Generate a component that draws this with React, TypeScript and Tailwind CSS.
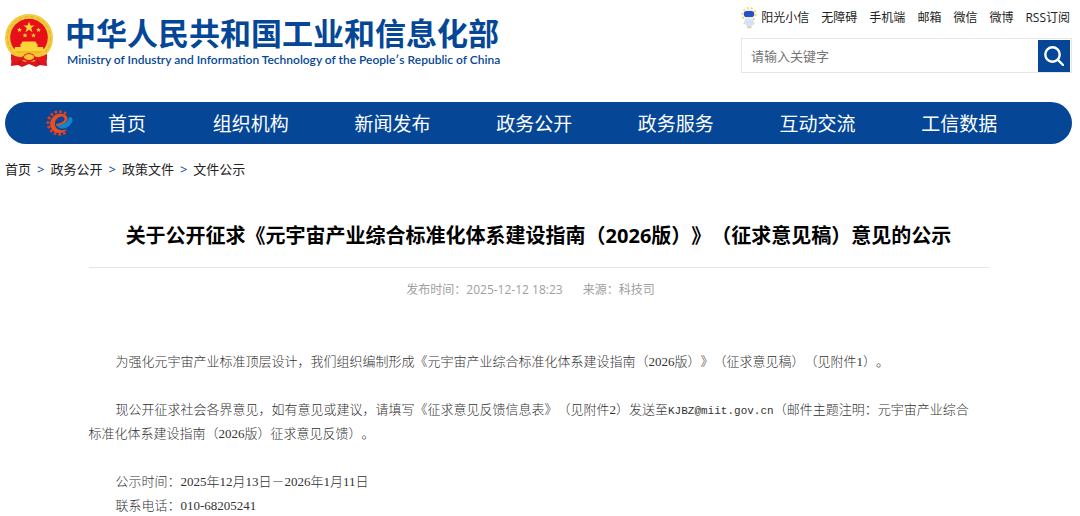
import React, { useState } from 'react';

const topLinks = ['无障碍', '手机端', '邮箱', '微信', '微博', 'RSS订阅'];

const navItems = ['组织机构', '新闻发布', '政务公开', '政务服务', '互动交流', '工信数据'];

const crumbs = ['首页', '政务公开', '政策文件', '文件公示'];

const Emblem = () => (
  <svg viewBox="0 0 48 54" className="w-12 h-[54px] shrink-0" aria-hidden="true">
    <path d="M7 38 L6 52 L13 51 L17 53 L24 50 L31 53 L35 51 L42 52 L41 38 Z" fill="#d9161c" />
    <circle cx="24" cy="24" r="24" fill="#f4cb3c" />
    <circle cx="24" cy="24" r="21.500" fill="none" stroke="#e5b02c" strokeWidth="1" strokeDasharray="4 2" />
    <circle cx="24" cy="23.500" r="18.800" fill="#e60f1a" />
    <path d="M24 7.500 L25.400 11.600 H29.600 L26.200 14.100 L27.500 18.200 L24 15.700 L20.500 18.200 L21.800 14.100 L18.400 11.600 H22.600 Z" fill="#fbd437" />
    <g fill="#fbd437">
      <path d="M14.500 13.500 l.7 1.600 1.800.1-1.400 1.100.5 1.700-1.600-1-1.500 1 .4-1.700-1.400-1.100 1.800-.1z" />
      <path d="M33.500 13.500 l.7 1.600 1.800.1-1.400 1.100.5 1.700-1.600-1-1.500 1 .4-1.700-1.400-1.100 1.800-.1z" />
      <path d="M20 19 l.7 1.600 1.800.1-1.400 1.100.5 1.700-1.600-1-1.500 1 .4-1.700-1.400-1.100 1.800-.1z" />
      <path d="M28.500 19 l.7 1.600 1.800.1-1.400 1.100.5 1.700-1.600-1-1.500 1 .4-1.700-1.400-1.100 1.800-.1z" />
      <path d="M17.500 27.500 H30.500 L32 30 H16 Z" />
      <path d="M15.500 30 H32.500 V33 H38 L39 37 H9 L10 33 H15.500 Z" />
      <path d="M10 37 H38 L34 40 H14 Z" fill="#f0b92a" />
    </g>
    <path d="M6 40 Q14 45 19 42 Q21 39 24 39 Q27 39 29 42 Q34 45 42 40 L42 46 Q34 49 29 46 L24 49 L19 46 Q14 49 6 46 Z" fill="#e3171d" />
    <path d="M11 40 Q17 42 20 39 M37 40 Q31 42 28 39" fill="none" stroke="#f5c732" strokeWidth="2.400" />
    <ellipse cx="24" cy="43" rx="5" ry="3" fill="#f5c732" />
    <path d="M16 46 L13 51 M32 46 L35 51" stroke="#a80d12" strokeWidth="1" />
  </svg>
);

const Mascot = () => (
  <svg viewBox="0 0 16 22" className="w-4 h-[22px]" aria-hidden="true">
    <circle cx="8" cy="7.500" r="6.600" fill="none" stroke="#f9d04f" strokeWidth="1.800" strokeDasharray="1.800 2.300" />
    <path d="M5 11 H11 L14 17 L11.500 18 L10.500 21 H8.500 L6 20 L5 17.500 L2 17 Z" fill="#d5e2f4" />
    <circle cx="8" cy="7.500" r="5.400" fill="#e8f0fb" />
    <rect x="2.800" y="4" width="10.400" height="6" rx="2.800" fill="#2452c6" />
    <path d="M6 20.500 H10" stroke="#f6c98d" strokeWidth="1.500" />
  </svg>
);

const GearLogo = () => (
  <svg viewBox="0 0 28 28" className="w-7 h-7" aria-hidden="true">
    <path d="M20 5 A11.200 11.200 0 1 0 21 22" fill="none" stroke="#d93f22" strokeWidth="3" strokeDasharray="2.600 2" />
    <path d="M21 7.500 C17 3.500 10 4 6.500 8.500 C2.500 13.500 4 20.500 9 23 C13.500 25 18.500 23.500 21 20 C17 22 12 21.500 10 18.500 C7.500 14.500 9.500 9.500 13.500 8 C16.500 7 18.500 8 18.500 10 C18.500 12.500 14.500 14.500 10 15 L10.500 17 C17 17 23.500 11.500 21 7.500 Z" fill="#ec4c20" />
    <path d="M10.500 16.500 C16 16.500 21.500 13.500 22.500 9.500 C23 8 24 8 25 8 C28 10 26.500 14 23 17 C19 20.500 13 20.500 10.500 16.500 Z" fill="#1184cf" />
  </svg>
);

const SearchIcon = () => (
  <svg viewBox="0 0 20 20" className="w-5 h-5" fill="none" stroke="white" strokeWidth="2.400" aria-hidden="true">
    <circle cx="8.500" cy="8.500" r="7.200" />
    <path d="M13.700 13.700 L19 19" strokeLinecap="round" />
  </svg>
);

const App = () => {
  const [keyword, setKeyword] = useState('');

  return (
    <div className="bg-white text-black pl-[5px] pr-2 font-['Open_Sans','Noto_Sans_CJK_SC',sans-serif] [text-spacing-trim:space-all]" lang="zh-CN">
      <header className="flex items-start justify-between">
        <a href="#home" className="flex items-start gap-3 pt-3.5 text-[#054796]">
          <Emblem />
          <span className="flex flex-col pt-px">
            <span className="text-[31px] leading-9 font-bold whitespace-nowrap">中华人民共和国工业和信息化部</span>
            <span className="font-['Lato',sans-serif] text-xs leading-[18px] font-semibold whitespace-nowrap pl-0.5">
              Ministry of Industry and Information Technology of the People′s Republic of China
            </span>
          </span>
        </a>

        <div className="w-[331px] pt-[7px]">
          <div className="flex items-center justify-end gap-3 text-xs leading-[22px] text-[#222] whitespace-nowrap pr-0.5">
            <a href="#mascot" className="flex items-center gap-1">
              <Mascot />
              阳光小信
            </a>
            {topLinks.map((label) => (
              <a key={label} href="#top">{label}</a>
            ))}
          </div>
          <form className="flex items-center mt-[9px] h-[35px] border border-[#e6e6e6] pr-px" onSubmit={(e) => e.preventDefault()}>
            <input
              type="text"
              aria-label="搜索"
              placeholder="请输入关键字"
              value={keyword}
              onChange={(e) => setKeyword(e.target.value)}
              className="flex-1 min-w-0 h-full px-[9px] text-[13px] outline-none placeholder:text-[#757575]"
            />
            <button type="submit" aria-label="搜索" className="flex items-center justify-center w-8 h-8 bg-[#054796]">
              <SearchIcon />
            </button>
          </form>
        </div>
      </header>

      <nav className="flex items-center h-[42px] mt-[29px] pl-[41px] pr-[42px] rounded-full bg-[#054796] text-white text-[19px] whitespace-nowrap">
        <GearLogo />
        <a href="#home" className="w-[106px] pt-0.5 text-center">首页</a>
        {navItems.map((item) => (
          <a key={item} href="#nav" className="flex-1 pt-0.5 text-center">{item}</a>
        ))}
      </nav>

      <div className="flex items-center gap-1.5 mt-[15px] text-[13px] leading-5 text-[#222]">
        {crumbs.map((crumb, i) => (
          <React.Fragment key={crumb}>
            {i > 0 && <span className="text-[#054796]">&gt;</span>}
            <a href="#crumb">{crumb}</a>
          </React.Fragment>
        ))}
      </div>

      <main className="max-w-[900px] mx-auto mt-[41px]">
        <h1 className="text-xl leading-8 font-bold text-center whitespace-nowrap pb-[15px] border-b border-[#e6e6e6]">
          关于公开征求《元宇宙产业综合标准化体系建设指南（2026版）》（征求意见稿）意见的公示
        </h1>
        <div className="flex justify-center gap-5 pt-3 pr-4 text-xs leading-5 text-[#a0a0a0]">
          <span>发布时间：2025-12-12 18:23</span>
          <span>来源：科技司</span>
        </div>

        <div className="mt-[50px] font-['Liberation_Serif','Noto_Sans_CJK_SC',serif] text-[13px] leading-6 font-light text-[#333]">
          <p className="indent-[27px]">
            为强化元宇宙产业标准顶层设计，我们组织编制形成《元宇宙产业综合标准化体系建设指南（2026版）》（征求意见稿）（见附件1）。
          </p>
          <p className="indent-[27px] mt-6">
            现公开征求社会各界意见，如有意见或建议，请填写《征求意见反馈信息表》（见附件2）发送至
            <span className="font-['Liberation_Mono',monospace] text-[11px] leading-none">KJBZ@miit.gov.cn</span>
            （邮件主题注明：元宇宙产业综合
            <br />
            标准化体系建设指南（2026版）征求意见反馈）。
          </p>
          <p className="indent-[27px] mt-6">公示时间：2025年12月13日－2026年1月11日</p>
          <p className="indent-[27px]">联系电话：010-68205241</p>
        </div>
      </main>
    </div>
  );
};

export default App;
